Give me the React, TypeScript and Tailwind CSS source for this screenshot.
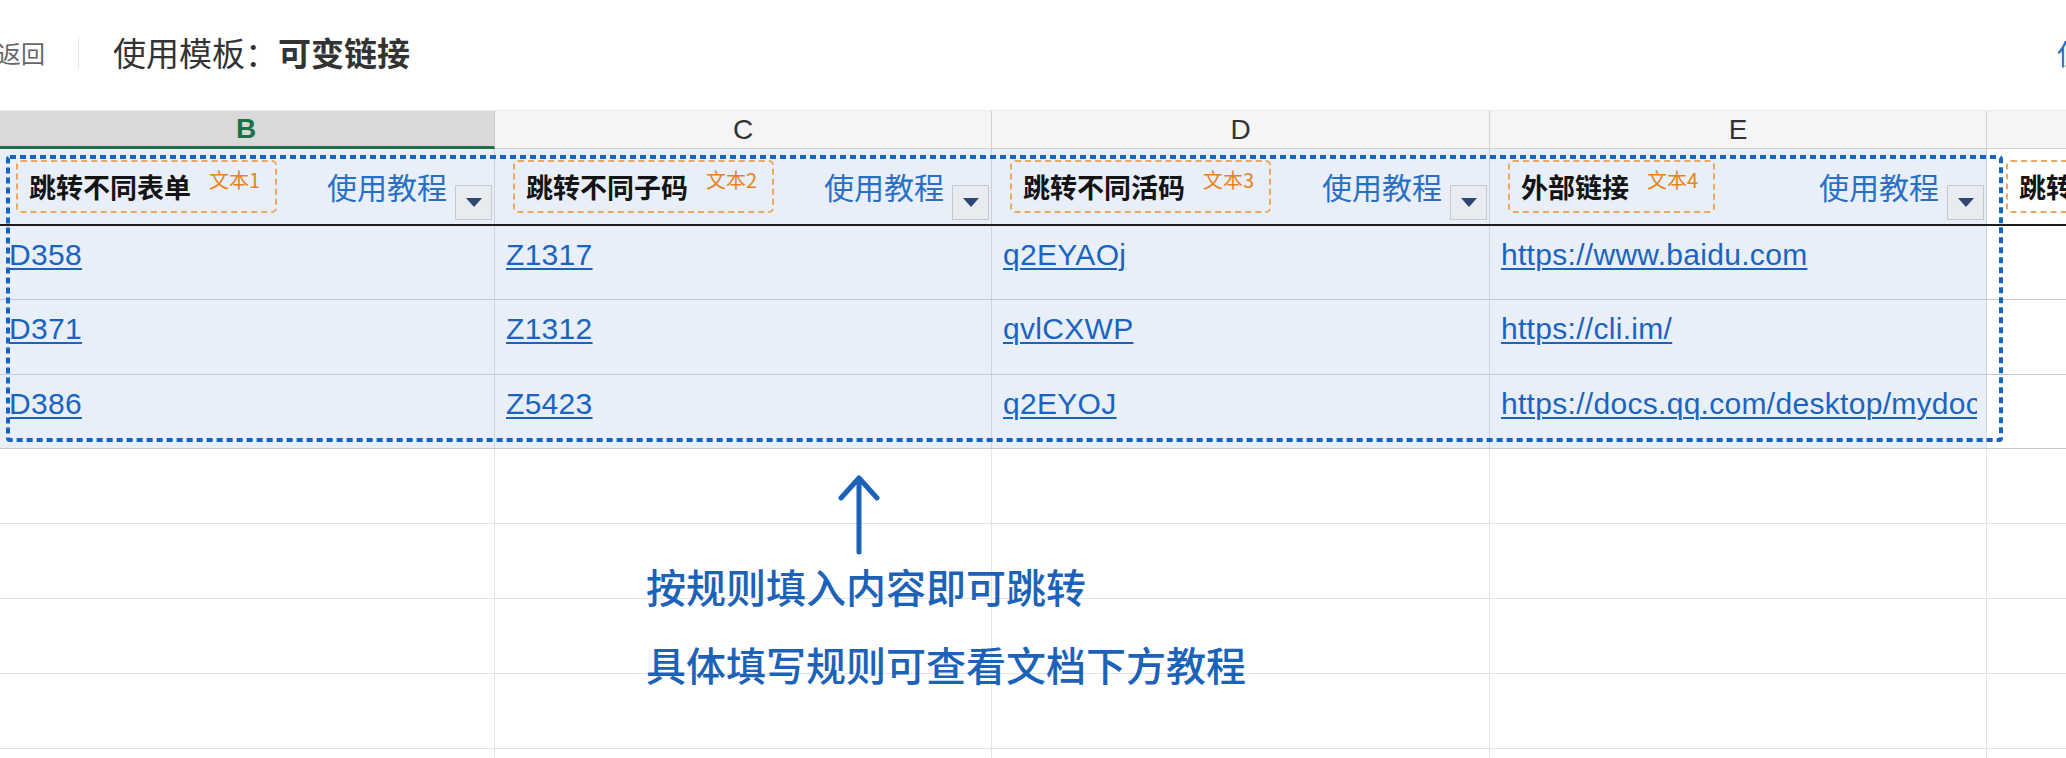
const COLS = [
  { key: 'B', w: 'w-[497px]', title: '跳转不同表单', tag: '文本1', links: ['D358', 'D371', 'D386'] },
  { key: 'C', w: 'w-[497px]', title: '跳转不同子码', tag: '文本2', links: ['Z1317', 'Z1312', 'Z5423'] },
  { key: 'D', w: 'w-[498px]', title: '跳转不同活码', tag: '文本3', links: ['q2EYAOj', 'qvlCXWP', 'q2EYOJ'] },
  { key: 'E', w: 'w-[497px]', title: '外部链接', tag: '文本4', links: ['https://www.baidu.com', 'https://cli.im/', 'https://docs.qq.com/desktop/mydoc'] },
]

const ROW_H = ['h-[74px]', 'h-[75px]', 'h-[74px]']

function TagBox({ title, tag }: { title: string; tag: string }) {
  return (
    <div className="flex h-[53px] shrink-0 items-center rounded-[5px] border-2 border-dashed border-[#eaa862] pl-[11px] pr-[15px]">
      <span className="text-[27px] font-bold leading-none text-[#141414]">{title}</span>
      <span className="ml-[18px] -mt-[14px] text-[20px] leading-none text-[#e8831c]">{tag}</span>
    </div>
  )
}

function Dropdown() {
  return (
    <div className="mb-[4px] mr-[2px] flex h-[35px] w-[37px] shrink-0 items-center justify-center self-end border border-[#c4c8cf] bg-[#e8ebf0]">
      <svg width="16" height="9" viewBox="0 0 16 9">
        <path d="M0 0h16L8 9z" fill="#2e4674" />
      </svg>
    </div>
  )
}

export default function App() {
  return (
    <div className="relative h-[758px] w-[2066px] overflow-hidden bg-white font-['Noto_Sans_CJK_SC',sans-serif]">
      {/* Top bar */}
      <div className="flex h-[111px] items-center border-b border-[#ebebeb] pb-[4px]">
        <span className="-ml-[3px] text-[24px] text-[#666]">返回</span>
        <div className="ml-[33px] h-[34px] w-px bg-[#e8e8e8]" />
        <div className="ml-[34px] text-[33px] text-[#333]">
          使用模板：<span className="font-bold">可变链接</span>
        </div>
        <div className="ml-auto w-[9px] overflow-hidden whitespace-nowrap text-[28px] text-[#1f6fc5]">使用此模板</div>
      </div>

      <div className="-ml-[2px] flex flex-col">
        {/* Column letters */}
        <div className="flex h-[38px] font-['Liberation_Sans','Noto_Sans_CJK_SC',sans-serif] text-[28px]">
          {COLS.map((c) =>
            c.key === 'B' ? (
              <div key={c.key} className={`${c.w} flex shrink-0 items-center justify-center border-r border-b-[3px] border-r-[#cfcfcf] border-b-[#1e7145] bg-[#d9d9d9] font-bold text-[#1e7145]`}>
                {c.key}
              </div>
            ) : (
              <div key={c.key} className={`${c.w} flex shrink-0 items-center justify-center border-r border-b border-[#d2d2d2] bg-[#f5f5f5] text-[#333]`}>
                {c.key}
              </div>
            )
          )}
          <div className="w-[497px] shrink-0 border-b border-[#d2d2d2] bg-[#f5f5f5]" />
        </div>

        {/* Header row */}
        <div className="flex h-[77px] border-b-2 border-[#1d1d1d]">
          {COLS.map((c) => (
            <div key={c.key} className={`${c.w} flex shrink-0 items-center border-r border-[#c9d0da] bg-[#e8eff9] pl-[18px]`}>
              <TagBox title={c.title} tag={c.tag} />
              <span className="ml-auto mr-[8px] text-[30px] text-[#2a6fc6]">使用教程</span>
              <Dropdown />
            </div>
          ))}
          <div className="flex w-[497px] shrink-0 items-center bg-white pl-[19px]">
            <TagBox title="跳转不同链接" tag="文本5" />
          </div>
        </div>

        {/* Data rows */}
        {ROW_H.map((h, i) => (
          <div key={i} className={`flex ${h} border-b border-[#c3c9d2]`}>
            {COLS.map((c) => (
              <div key={c.key} className={`${c.w} shrink-0 border-r border-[#cfd5de] bg-[#e8eff9] pl-[11px] pr-[9px] pt-[12px]`}>
                <div className="overflow-hidden whitespace-nowrap">
                  <span className="font-['Liberation_Sans',sans-serif] text-[30px] leading-[34px] tracking-[0.3px] text-[#1a64c0] underline decoration-[1.5px] underline-offset-[3px]">
                    {c.links[i]}
                  </span>
                </div>
              </div>
            ))}
            <div className="w-[497px] shrink-0 bg-white" />
          </div>
        ))}

        {/* Empty rows */}
        {[0, 1, 2, 3, 4].map((i) => (
          <div key={i} className="flex h-[75px] border-b border-[#e4e4e4]">
            {COLS.map((c) => (
              <div key={c.key} className={`${c.w} shrink-0 border-r border-[#e4e4e4]`} />
            ))}
            <div className="w-[497px] shrink-0" />
          </div>
        ))}
      </div>

      {/* Selection outline + arrow */}
      <svg className="pointer-events-none absolute left-0 top-0" width="2066" height="758">
        <rect x="8" y="157" width="1993" height="283" rx="2" fill="none" stroke="#1565c0" strokeWidth="4" strokeDasharray="6 4" />
        <path d="M859 552V479M841 498l18-20 18 20" fill="none" stroke="#1b62b8" strokeWidth="5" strokeLinecap="round" strokeLinejoin="round" />
      </svg>

      {/* Annotations */}
      <div className="absolute left-[646px] top-[566px] text-[40px] font-medium leading-[40px] text-[#1b62b8]">按规则填入内容即可跳转</div>
      <div className="absolute left-[646px] top-[644px] text-[40px] font-medium leading-[40px] text-[#1b62b8]">具体填写规则可查看文档下方教程</div>
    </div>
  )
}
